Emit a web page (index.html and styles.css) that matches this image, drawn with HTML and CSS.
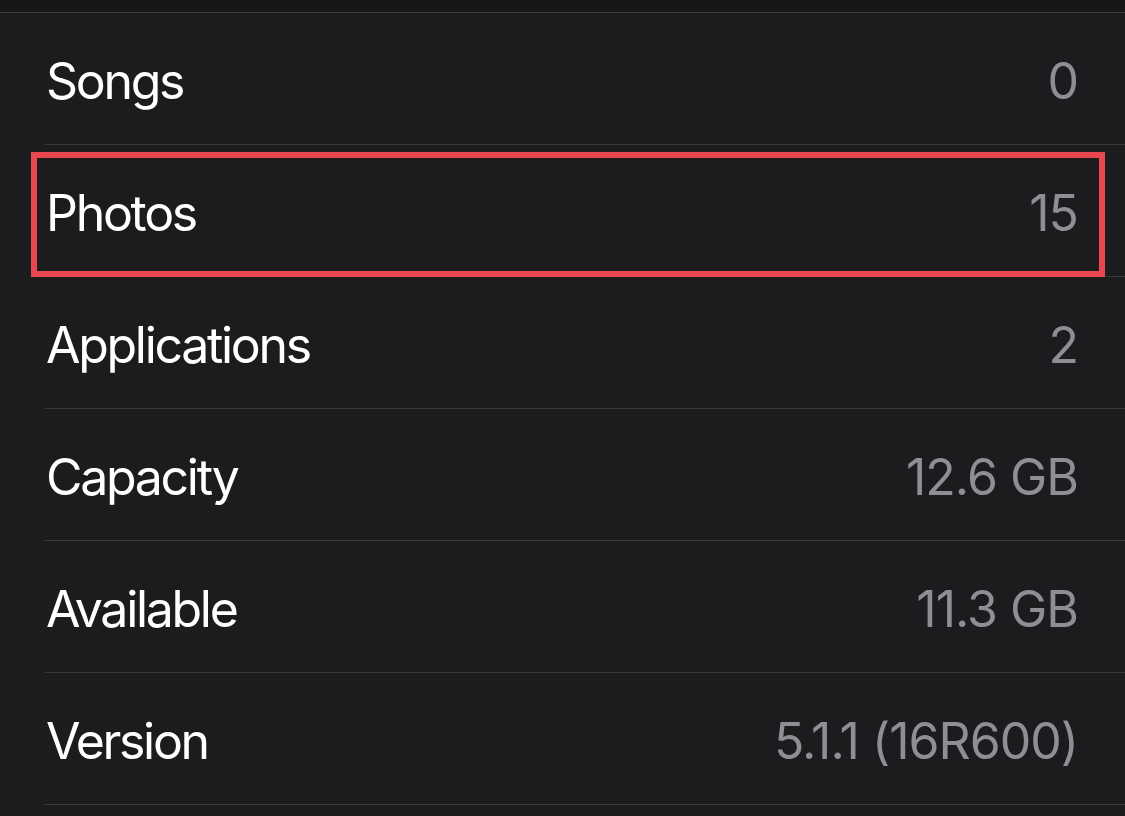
FILE: index.html
```html
<!DOCTYPE html>
<html lang="en">
<head>
<meta charset="utf-8">
<title>About</title>
<link rel="stylesheet" href="styles.css">
</head>
<body>
<div class="topbar"></div>
<div class="list">
  <div class="row"><span class="label">Songs</span><span class="value">0</span></div>
  <div class="row row-highlight"><span class="label">Photos</span><span class="value">15</span><div class="highlight"></div></div>
  <div class="row"><span class="label">Applications</span><span class="value">2</span></div>
  <div class="row"><span class="label">Capacity</span><span class="value">12.6 GB</span></div>
  <div class="row"><span class="label">Available</span><span class="value">11.3 GB</span></div>
  <div class="row"><span class="label">Version</span><span class="value">5.1.1 (16R600)</span></div>
</div>
</body>
</html>
```
FILE: styles.css
```css
html, body {
  margin: 0;
  padding: 0;
  background: #1c1c1e;
  height: 100%;
  overflow: hidden;
}
body {
  font-family: "Inter", "Noto Sans", sans-serif;
  -webkit-font-smoothing: antialiased;
}
.topbar {
  height: 12px;
  background: #171718;
  border-bottom: 1px solid #3a3a3d;
}
.list {
  display: flex;
  flex-direction: column;
}
.row {
  position: relative;
  height: 127px;
  margin-left: 45px;
  padding: 4px 47px 0 1px;
  box-sizing: content-box;
  display: flex;
  align-items: center;
  justify-content: space-between;
  border-bottom: 1px solid #38383a;
}
.label {
  color: #ffffff;
  font-size: 50px;
  letter-spacing: -2.3px;
}
.value {
  color: #8e8e93;
  font-size: 50px;
  letter-spacing: -1px;
}
.highlight {
  position: absolute;
  top: 7px;
  left: -14px;
  right: 20px;
  bottom: -1px;
  border: 6px solid #e8474f;
  pointer-events: none;
}
```
